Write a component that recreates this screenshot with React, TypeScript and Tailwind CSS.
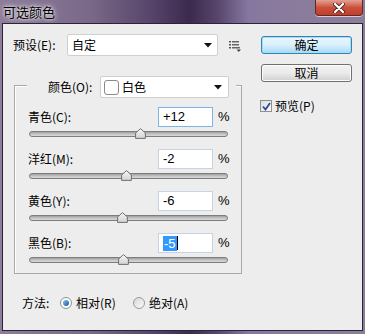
import React from "react";

const font = { fontFamily: '"Noto Sans CJK SC", "Liberation Sans", sans-serif' };
const numFont = { fontFamily: '"Liberation Sans", "Noto Sans CJK SC", sans-serif' };

function Arrow() {
  return (
    <svg width="8" height="5" viewBox="0 0 8 5">
      <polygon points="0,0 8,0 4,4.5" fill="#111" />
    </svg>
  );
}

function Thumb() {
  return (
    <svg width="11" height="11" viewBox="0 0 11 11">
      <defs>
        <linearGradient id="tg" x1="0" y1="0" x2="0" y2="1">
          <stop offset="0" stopColor="#f6f6f6" />
          <stop offset="1" stopColor="#d2d2d2" />
        </linearGradient>
      </defs>
      <polygon
        points="5.5,0.6 10.4,5 10.4,10.4 0.6,10.4 0.6,5"
        fill="url(#tg)"
        stroke="#6f6f6f"
        strokeWidth="1"
        strokeLinejoin="round"
      />
    </svg>
  );
}

function SliderRow({ label, value, text, focus, selected }: { label: string; value: number; text: string; focus?: boolean; selected?: boolean }) {
  const apex = 99.5 + value * 0.995;
  return (
    <div className="flex flex-col mb-[8px] last:mb-0">
      <div className="flex items-center h-[20px]">
        <div className="w-[130px] text-[12px] text-black" style={font}>{label}</div>
        <div
          className={`w-[55px] h-[20px] bg-white border flex items-center pl-[4px] text-[13px] text-black ${focus ? "border-[#7eb4ea]" : "border-[#c5d3e2]"}`}
          style={numFont}
        >
          {selected ? (
            <span className="flex items-center">
              <span className="bg-[#3399ff] text-white leading-[15px] px-[1px]">{text}</span>
              <span className="w-[1px] h-[14px] bg-black" />
            </span>
          ) : (
            <span>{text}</span>
          )}
        </div>
        <div className="ml-[5px] text-[13px] text-black" style={numFont}>%</div>
      </div>
      <div className="h-[14px] ml-[1px] w-[199px] relative flex items-center">
        <div className="w-full h-[6px] rounded-full border border-[#7d7d7d] bg-gradient-to-b from-[#9e9e9e] via-[#c4c4c4] to-[#d8d8d8]" />
        <div className="absolute top-[1px]" style={{ left: `${apex - 5.5}px` }}>
          <Thumb />
        </div>
      </div>
    </div>
  );
}

function ListIcon() {
  return (
    <svg width="12" height="12" viewBox="0 0 12 12">
      <rect x="0" y="1" width="2" height="1.5" fill="#555" />
      <rect x="3" y="1" width="7" height="1.5" fill="#666" />
      <rect x="0" y="4" width="2" height="1.5" fill="#555" />
      <rect x="3" y="4" width="7" height="1.5" fill="#666" />
      <rect x="0" y="7" width="2" height="1.5" fill="#555" />
      <rect x="3" y="7" width="8" height="1.5" fill="#666" />
      <polygon points="7.5,9.5 12,9.5 9.75,12" fill="#444" />
    </svg>
  );
}

export default function App() {
  return (
    <div
      className="w-[365px] h-[334px] flex flex-col bg-[linear-gradient(90deg,#8c7d98_0%,#7a6888_25%,#55436a_42%,#3b2a4d_52%,#5a476e_60%,#8677a0_68%,#8a7b9c_80%,#8b7e98_100%)] overflow-hidden"
      style={font}
    >
      <div className="h-[23px] flex items-start justify-between shrink-0">
        <div className="pl-[3px] pt-[3px] text-[13px] leading-[17px] text-black [text-shadow:0_0_6px_#ffffff,0_0_3px_#ffffff]">可选颜色</div>
        <div className="mr-[2px] w-[48px] h-[16px] rounded-b-[4px] border border-t-0 border-[#5e2a26] bg-gradient-to-b from-[#e4a092] via-[#c9503d] to-[#c43c28] flex items-center justify-center shadow-[0_1px_0_#d8c8dc]">
          <svg width="12" height="10" viewBox="0 0 12 10">
            <path d="M2 1 L10 9 M10 1 L2 9" stroke="#4a2a2a" strokeWidth="4" strokeLinecap="round" />
            <path d="M2 1 L10 9 M10 1 L2 9" stroke="#ffffff" strokeWidth="2.2" strokeLinecap="round" />
          </svg>
        </div>
      </div>

      <div className="ml-[2px] w-[361px] h-[308px] border border-[#2c2338] bg-[#ededed] flex flex-col">
        <div className="flex">
          {/* left column */}
          <div className="w-[258px] flex flex-col">
            <div className="flex items-center h-[22px] mt-[10px] pl-[10px]">
              <div className="w-[54px] text-[12px] text-black">预设(E):</div>
              <div className="w-[151px] h-[22px] bg-white border border-[#cfcfcf] rounded-[2px] flex items-center justify-between pl-[4px] pr-[5px]">
                <span className="text-[12px] text-black">自定</span>
                <Arrow />
              </div>
              <div className="ml-[11px] mt-[2px]">
                <ListIcon />
              </div>
            </div>

            <div className="ml-[11px] mt-[29px] w-[228px] h-[189px] border border-[#a9a9a9] relative pt-[21px] pl-[13px] shadow-[inset_1px_1px_0_#ffffff]">
              <div className="absolute top-[-10px] left-[12px] w-[209px] h-[22px] bg-[#ededed] flex items-center pl-[21px]">
                <div className="w-[52px] text-[12px] text-black">颜色(O):</div>
                <div className="w-[129px] h-[22px] bg-white border border-[#cfcfcf] rounded-[2px] flex items-center pl-[3px] pr-[6px]">
                  <div className="w-[15px] h-[15px] rounded-[3px] border border-[#8a8a8a] bg-white" />
                  <span className="ml-[3px] text-[12px] text-black flex-1">白色</span>
                  <Arrow />
                </div>
              </div>
              <SliderRow label="青色(C):" value={12} text="+12" focus />
              <SliderRow label="洋红(M):" value={-2} text="-2" />
              <SliderRow label="黄色(Y):" value={-6} text="-6" />
              <SliderRow label="黑色(B):" value={-5} text="-5" selected />
            </div>
          </div>

          {/* right column */}
          <div className="flex flex-col">
            <div className="mt-[12px] w-[91px] h-[18px] rounded-[3px] border border-[#3c7fb1] bg-gradient-to-b from-[#eaf6fd] via-[#d9f0fc] to-[#a7d9f5] shadow-[inset_0_0_0_1px_#9fe0f8] flex items-center justify-center text-[12px] text-black">
              确定
            </div>
            <div className="mt-[10px] w-[91px] h-[18px] rounded-[3px] border border-[#707070] bg-gradient-to-b from-[#f2f2f2] via-[#ebebeb] to-[#cfcfcf] shadow-[inset_0_0_0_1px_#fcfcfc] flex items-center justify-center text-[12px] text-black">
              取消
            </div>
            <div className="mt-[15px] -ml-[1px] flex items-center">
              <div className="w-[12px] h-[12px] border border-[#8e8f8f] bg-gradient-to-br from-[#dcdcdc] to-[#fbfbfb] flex items-center justify-center">
                <svg width="9" height="9" viewBox="0 0 9 9">
                  <path d="M1 4.5 L3.5 7.5 L8 1" stroke="#2c4a9a" strokeWidth="1.8" fill="none" />
                </svg>
              </div>
              <span className="ml-[3px] text-[12px] text-black">预览(P)</span>
            </div>
          </div>
        </div>

        <div className="mt-[21px] h-[16px] flex items-center pl-[19px] text-[12px] text-black">
          <span className="w-[38px]">方法:</span>
          <div className="w-[12px] h-[12px] rounded-full border border-[#8e8f8f] bg-white flex items-center justify-center">
            <div className="w-[6px] h-[6px] rounded-full bg-gradient-to-br from-[#7ec6f3] to-[#135b9c]" />
          </div>
          <span className="ml-[4px] w-[57px]">相对(R)</span>
          <div className="w-[12px] h-[12px] rounded-full border border-[#9a9a9a] bg-gradient-to-br from-[#d8d8d8] to-[#fafafa]" />
          <span className="ml-[4px]">绝对(A)</span>
        </div>
      </div>
    </div>
  );
}
